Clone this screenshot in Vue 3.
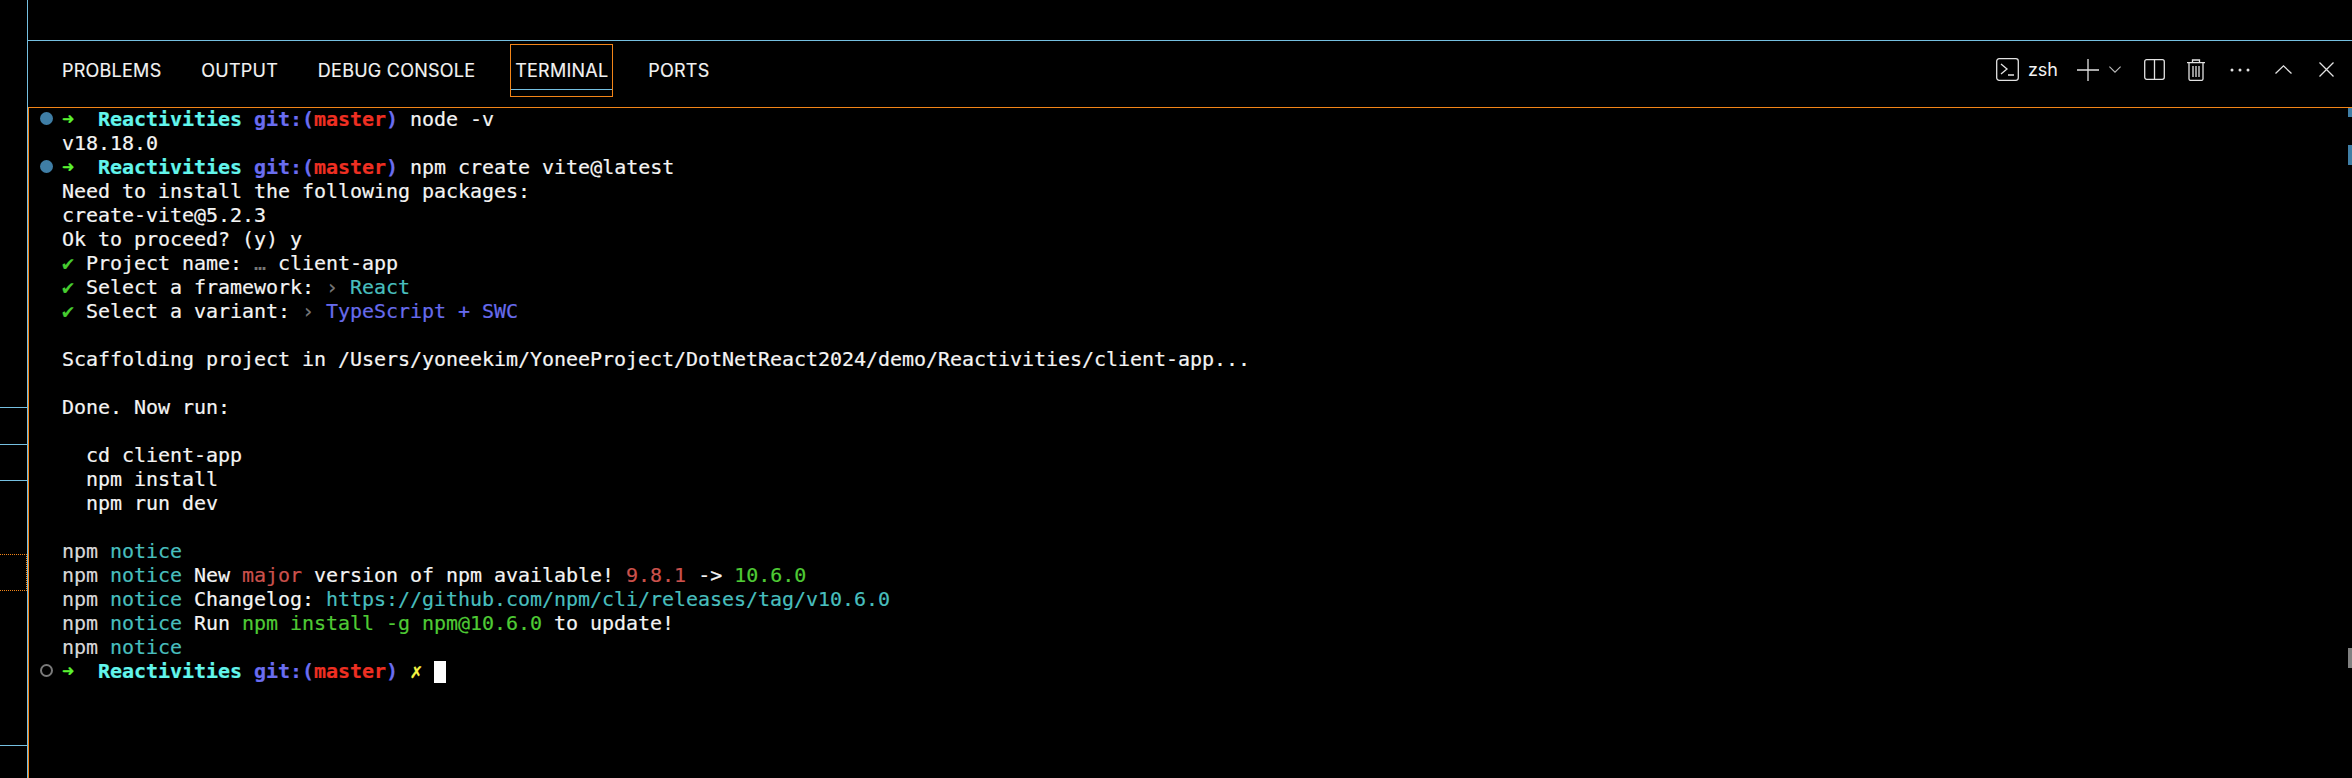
<script setup>
const tabs = [
  { label: 'PROBLEMS' },
  { label: 'OUTPUT' },
  { label: 'DEBUG CONSOLE' },
  { label: 'TERMINAL', active: true },
  { label: 'PORTS' },
]
const sideMarks = [
  { top: 407, cls: 'blue' },
  { top: 444, cls: 'blue' },
  { top: 480, cls: 'blue' },
  { top: 745, cls: 'blue' },
]
</script>

<template>
  <div class="screen">
    <aside class="side">
      <i v-for="m in sideMarks" :key="m.top" class="mark" :class="m.cls" :style="{ top: m.top + 'px' }"></i>
      <i class="focus-box"></i>
    </aside>
    <main class="main">
      <div class="topgap"></div>
      <header class="panelbar">
        <nav class="tabs">
          <span v-for="t in tabs" :key="t.label" class="tab" :class="{ active: t.active }">{{ t.label }}</span>
        </nav>
        <div class="actions">
          <svg class="ic" width="23" height="23" viewBox="0 0 23 23" fill="none" stroke="#e2e2e2" stroke-width="1.3">
            <rect x="0.7" y="0.7" width="21.6" height="21.6" rx="2.5" />
            <path d="M5 6l6 5-6 5M12 17h6" />
          </svg>
          <span class="zsh">zsh</span>
          <svg class="ic plus" width="22" height="22" viewBox="0 0 22 22" fill="none" stroke="#e2e2e2" stroke-width="1.3">
            <path d="M11 0v22M0 11h22" />
          </svg>
          <svg class="ic chev" width="12" height="7" viewBox="0 0 12 7" fill="none" stroke="#bdbdbd" stroke-width="1.1">
            <path d="M0.4 0.6L6 6.2l5.600-5.600" />
          </svg>
          <svg class="ic split" width="21" height="21" viewBox="0 0 21 21" fill="none" stroke="#e2e2e2" stroke-width="1.3">
            <rect x="0.7" y="0.7" width="19.6" height="19.6" rx="2" />
            <path d="M10.500 0.700v19.600" />
          </svg>
          <svg class="ic trash" width="18" height="22" viewBox="0 0 18 22" fill="none" stroke="#e2e2e2" stroke-width="1.3">
            <path d="M0 3.600h18M5.500 3.200V1h7v2.200M2 4v16a1.500 1.500 0 0 0 1.500 1.400h11A1.500 1.500 0 0 0 16 20V4M6 7v11M9 7v11M12 7v11" />
          </svg>
          <svg class="ic more" width="20" height="4" viewBox="0 0 20 4" fill="#e2e2e2">
            <circle cx="2" cy="2" r="1.500" /><circle cx="10" cy="2" r="1.500" /><circle cx="18" cy="2" r="1.500" />
          </svg>
          <svg class="ic up" width="17" height="9" viewBox="0 0 17 9" fill="none" stroke="#e2e2e2" stroke-width="1.300">
            <path d="M0.500 8.500L8.500 0.900l8 7.600" />
          </svg>
          <svg class="ic close" width="15" height="15" viewBox="0 0 15 15" fill="none" stroke="#e2e2e2" stroke-width="1.300">
            <path d="M0.500 0.500l14 14M14.500 0.500l-14 14" />
          </svg>
        </div>
      </header>
      <section class="term">
        <div class="output">
          <div class="line"><i class="dot-mark filled"></i><span class="arrow">➜</span>&nbsp;&nbsp;<b class="cy">Reactivities</b> <b class="bl">git:(</b><b class="rd">master</b><b class="bl">)</b> node -v</div>
          <div class="line">v18.18.0</div>
          <div class="line"><i class="dot-mark filled"></i><span class="arrow">➜</span>&nbsp;&nbsp;<b class="cy">Reactivities</b> <b class="bl">git:(</b><b class="rd">master</b><b class="bl">)</b> npm create vite@latest</div>
          <div class="line">Need to install the following packages:</div>
          <div class="line">create-vite@5.2.3</div>
          <div class="line">Ok to proceed? (y) y</div>
          <div class="line"><span class="gr">✔</span> Project name: <span class="gy">…</span> client-app</div>
          <div class="line"><span class="gr">✔</span> Select a framework: <span class="gy">›</span> <span class="te">React</span></div>
          <div class="line"><span class="gr">✔</span> Select a variant: <span class="gy">›</span> <span class="vi">TypeScript + SWC</span></div>
          <div class="line"></div>
          <div class="line">Scaffolding project in /Users/yoneekim/YoneeProject/DotNetReact2024/demo/Reactivities/client-app...</div>
          <div class="line"></div>
          <div class="line">Done. Now run:</div>
          <div class="line"></div>
          <div class="line">&nbsp;&nbsp;cd client-app</div>
          <div class="line">&nbsp;&nbsp;npm install</div>
          <div class="line">&nbsp;&nbsp;npm run dev</div>
          <div class="line"></div>
          <div class="line"><span class="np">npm</span> <span class="te">notice</span></div>
          <div class="line"><span class="np">npm</span> <span class="te">notice</span> New <span class="rs">major</span> version of npm available! <span class="rs">9.8.1</span> -&gt; <span class="gn">10.6.0</span></div>
          <div class="line"><span class="np">npm</span> <span class="te">notice</span> Changelog: <span class="te">https://github.com/npm/cli/releases/tag/v10.6.0</span></div>
          <div class="line"><span class="np">npm</span> <span class="te">notice</span> Run <span class="gn">npm install -g npm@10.6.0</span> to update!</div>
          <div class="line"><span class="np">npm</span> <span class="te">notice</span></div>
          <div class="line"><i class="dot-mark ring"></i><span class="arrow">➜</span>&nbsp;&nbsp;<b class="cy">Reactivities</b> <b class="bl">git:(</b><b class="rd">master</b><b class="bl">)</b> <b class="ye">✗</b> <i class="cursor"></i></div>
        </div>
        <i class="rule r1"></i>
        <i class="rule r2"></i>
        <i class="rule r3"></i>
      </section>
    </main>
  </div>
</template>

<style>
html, body { margin: 0; background: #000; }
</style>

<style scoped>
.screen {
  display: flex;
  width: 2352px;
  height: 778px;
  background: #000;
  overflow: hidden;
}
.side {
  position: relative;
  width: 27px;
  flex: none;
  border-right: 1px solid #75bfe0;
}
.mark {
  position: absolute;
  left: 0;
  width: 27px;
  border-top: 1px solid #75bfe0;
}
.focus-box {
  position: absolute;
  left: 0;
  top: 554px;
  width: 26px;
  height: 35px;
  border: 1px dotted #f38518;
  border-left: 0;
}
.main {
  flex: 1;
  min-width: 0;
  display: flex;
  flex-direction: column;
}
.topgap {
  height: 40px;
  flex: none;
  border-bottom: 1px solid #75bfe0;
}
.panelbar {
  height: 66px;
  flex: none;
  display: flex;
  align-items: flex-start;
  justify-content: space-between;
  border-bottom: 1px solid #f38518;
}
.tabs {
  display: flex;
  gap: 29.8px;
  padding: 3px 0 0 29px;
  font: 18px/1 Inter, "Liberation Sans", sans-serif;
  letter-spacing: 0.25px;
  color: #f2f2f2;
  -webkit-text-stroke: 0.15px #f2f2f2;
}
.tab {
  position: relative;
  display: flex;
  align-items: center;
  box-sizing: border-box;
  height: 53px;
  padding: 0 5px;
  white-space: nowrap;
}
.tab.active {
  border: 1px solid #f38518;
  padding: 0 4px;
}
.tab.active::after {
  content: '';
  position: absolute;
  left: 0;
  right: 0;
  bottom: 6px;
  border-top: 1px solid #75bfe0;
}
.actions {
  display: flex;
  align-items: center;
  height: 57px;
  padding-right: 18px;
  color: #f2f2f2;
}
.ic { flex: none; display: block; }
.zsh { font: 18px Inter, "Liberation Sans", sans-serif; margin-left: 9px; }
.plus { margin-left: 19px; }
.chev { margin-left: 10px; }
.split { margin-left: 23px; }
.trash { margin-left: 22px; }
.more { margin-left: 25px; }
.up { margin-left: 25px; }
.close { margin-left: 27px; }
.term {
  position: relative;
  flex: 1;
  min-height: 0;
  padding-left: 33px;
  font: 20px/24px "DejaVu Sans Mono", monospace;
  letter-spacing: -0.04px;
  color: #f4f4f4;
  border-left: 1px solid #f38518;
  -webkit-text-stroke: 0.2px;
}
.output { margin-top: -1px; }
.line {
  position: relative;
  height: 24px;
  white-space: pre;
}
.line b { font-weight: 700; }
.dot-mark {
  position: absolute;
  left: -22px;
  top: 5px;
  width: 13px;
  height: 13px;
  border-radius: 50%;
  box-sizing: border-box;
}
.dot-mark.filled { background: #3f7ea6; }
.dot-mark.ring { border: 2.5px solid #7a7a7a; }
.arrow { color: #5cf132; font-weight: 700; }
.cy { color: #62f5ec; }
.bl { color: #6a6df0; }
.rd { color: #ee2f22; }
.ye { color: #f5f544; }
.gr { color: #46cc30; }
.gy { color: #777; }
.te { color: #48bebe; }
.vi { color: #676bec; }
.np { color: #d8d8d8; }
.rs { color: #cc514c; }
.gn { color: #4fca35; }
.cursor {
  display: inline-block;
  width: 12px;
  height: 22px;
  background: #fff;
  vertical-align: -5px;
}
.rule {
  position: absolute;
  right: 0;
  width: 4px;
}
.r1 { top: 0; height: 9px; background: #3f7ea6; }
.r2 { top: 37px; height: 20px; background: #3f7ea6; }
.r3 { top: 540px; height: 20px; background: #808080; }
</style>
